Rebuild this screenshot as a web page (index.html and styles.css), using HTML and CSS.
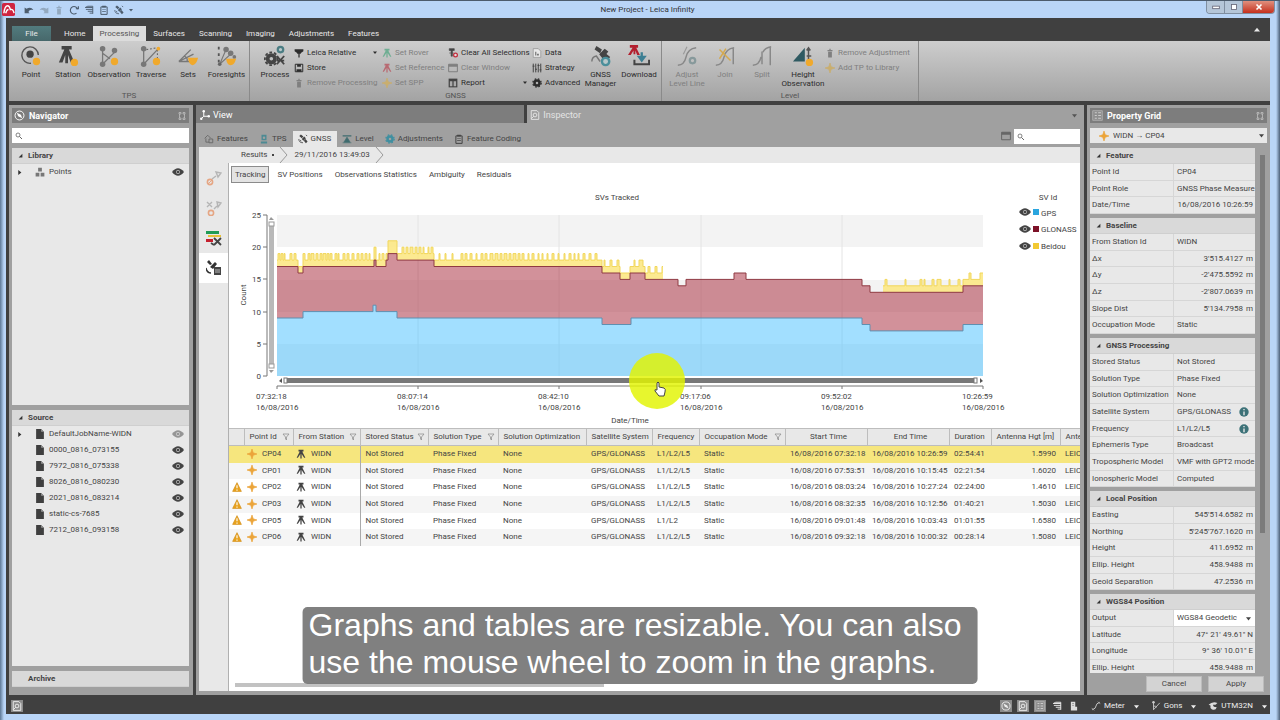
FILE: index.html
```html
<!DOCTYPE html>
<html lang="en">
<head>
  <meta charset="UTF-8">
  <meta name="viewport" content="width=device-width, initial-scale=1.0">
  <title>New Project - Leica Infinity</title>
  <link rel="stylesheet" href="styles.css">
</head>
<body>

  <!-- icon sprite -->
  <svg class="sprite" aria-hidden="true">
    <symbol id="i-point" viewBox="0 0 24 24"><path d="M12 20A9 9 0 1 1 20 11" fill="none" stroke="#555" stroke-width="1.6"/><circle cx="11" cy="10" r="4" fill="#444"/><circle cx="18" cy="18" r="4" fill="#f0a92c"/></symbol>
    <symbol id="i-station" viewBox="0 0 24 24"><path d="M5 1h11v4H5zM8 5h5l6 14h-4l-3-8v9H9v-9l-3 8H2z" fill="#444"/><circle cx="19" cy="19" r="4" fill="#f0a92c"/></symbol>
    <symbol id="i-observation" viewBox="0 0 24 24"><path d="M5 4v17M5 21L19 7M5 9l8 6" fill="none" stroke="#777" stroke-width="1.4"/><circle cx="5" cy="4" r="3" fill="#777"/><circle cx="5" cy="21" r="3" fill="#777"/><circle cx="18" cy="6" r="3" fill="#777"/><circle cx="18" cy="18" r="4" fill="#f0a92c"/></symbol>
    <symbol id="i-traverse" viewBox="0 0 24 24"><path d="M4 4v17M4 21L20 4" fill="none" stroke="#777" stroke-width="1.4"/><path d="M7 5l12-2M19 5v12" fill="none" stroke="#666" stroke-width="1.2" stroke-dasharray="2 2"/><circle cx="4" cy="4" r="3" fill="#777"/><circle cx="4" cy="21" r="3" fill="#777"/><circle cx="20" cy="4" r="2" fill="#f0a92c"/><circle cx="18" cy="18" r="4" fill="#f0a92c"/></symbol>
    <symbol id="i-sets" viewBox="0 0 24 24"><path d="M2 18h18M2 18L15 5M2 18l16-8M8 12q4 2 3 6" fill="none" stroke="#777" stroke-width="1.4"/><path d="M12 14h11q-2 8-6 8t-5-8z" fill="#f0a92c"/></symbol>
    <symbol id="i-foresights" viewBox="0 0 24 24"><path d="M3 2v18" stroke="#555" stroke-width="2" stroke-dasharray="3 4"/><path d="M4 21L18 8M4 21L11 5" fill="none" stroke="#777" stroke-width="1.2"/><circle cx="4" cy="21" r="2" fill="#666"/><circle cx="11" cy="5" r="3" fill="#777"/><circle cx="16" cy="9" r="3" fill="#777"/><circle cx="20" cy="13" r="2" fill="#777"/><path d="M11 15h11q-2 7-6 7t-5-7z" fill="#f0a92c"/></symbol>
    <symbol id="i-gear" viewBox="0 0 24 24"><circle cx="12" cy="12" r="6" fill="none" stroke="currentColor" stroke-width="6"/><circle cx="12" cy="12" r="10" fill="none" stroke="currentColor" stroke-width="3" stroke-dasharray="4 4"/></symbol>
    <symbol id="i-process" viewBox="0 0 24 24"><circle cx="8" cy="15" r="4" fill="none" stroke="#444" stroke-width="4"/><circle cx="8" cy="15" r="7" fill="none" stroke="#444" stroke-width="2" stroke-dasharray="3 2"/><circle cx="18" cy="5" r="3" fill="#b9c8ca" stroke="#4b7d83" stroke-width="2.4"/><path d="M14 12l8 9M22 12l-8 9M15 17h7" stroke="#444" stroke-width="2"/></symbol>
    <symbol id="i-sat" viewBox="0 0 24 24"><path d="M7 1l6 5-4 4-6-5zM18 12l5 6-4 4-5-6zM9 12l6-6 4 4-6 6z" fill="currentColor"/><path d="M19 2l3 3M2 12q0 9 10 9M5 15l3 2" fill="none" stroke="currentColor" stroke-width="2"/></symbol>
    <symbol id="i-manager" viewBox="0 0 24 24"><path d="M7 1l6 4-2 4-6-4zM17 9l5 4-3 4-5-4zM10 10l6-6 4 3-6 8z" fill="#444"/><path d="M2 18q0-5 5-6l4 6" fill="none" stroke="#777" stroke-width="1.6"/><circle cx="17" cy="18" r="4" fill="#b9c8ca" stroke="#4b8f9b" stroke-width="2.6"/></symbol>
    <symbol id="i-download" viewBox="0 0 24 24"><path d="M2 0h9v3H2zM5 3h4l4 8h-3L8 6v4H6V6l-3 5H0z" fill="#b3202f"/><path d="M15 8v7M12 13l3 4 3-4z" stroke="#3d7f93" stroke-width="2.5" fill="#3d7f93"/><path d="M7 16v5h16v-5" fill="none" stroke="#444" stroke-width="2.2"/></symbol>
    <symbol id="i-levelline" viewBox="0 0 24 24"><path d="M2 22q7 0 9-9t11-10" fill="none" stroke="#888" stroke-width="1.6"/><path d="M8 10l4-8" stroke="#999" stroke-width="1.2"/><circle cx="18" cy="17" r="3" fill="none" stroke="#87999b" stroke-width="2.4"/></symbol>
    <symbol id="i-join" viewBox="0 0 24 24"><path d="M2 22q7 0 9-9t11-10M21 4v17" fill="none" stroke="#888" stroke-width="1.6"/><path d="M6 5l12 12M13 4L6 15" stroke="#d4a94e" stroke-width="1.6"/></symbol>
    <symbol id="i-split" viewBox="0 0 24 24"><path d="M2 22q7 0 9-9M13 8q2-5 9-6M21 3v19M12 7v14" fill="none" stroke="#888" stroke-width="1.6"/></symbol>
    <symbol id="i-height" viewBox="0 0 24 24"><path d="M1 18L14 3v15z" fill="#2f5a62"/><path d="M18 3v16M16 6l2-3 2 3M16 12h5" fill="none" stroke="#555" stroke-width="1.6"/><circle cx="19" cy="19" r="4" fill="#f0a92c"/></symbol>
    <symbol id="i-tripod" viewBox="0 0 16 16"><path d="M4 1h8v3H4zM6 4h4l5 10h-2L9 8v7H7V8l-4 6H1z" fill="currentColor"/></symbol>
    <symbol id="i-receiver" viewBox="0 0 16 16"><path d="M1 2h14v3l-4 3v1H9v6H7V9H5V8L1 5z" fill="currentColor"/></symbol>
    <symbol id="i-disk" viewBox="0 0 16 16"><path d="M2 2h12v12H2z" fill="none" stroke="currentColor" stroke-width="1.6"/><path d="M5 2h6v4H5zM4 10h8v4H4z" fill="currentColor"/></symbol>
    <symbol id="i-bin" viewBox="0 0 16 16"><path d="M4 3h8v2H4zM5 6h6v9H5zM7 1h2v2H7z" fill="currentColor"/></symbol>
    <symbol id="i-cross" viewBox="0 0 16 16"><path d="M8 0l2 6 6 2-6 2-2 6-2-6-6-2 6-2z" fill="currentColor" stroke="currentColor"/></symbol>
    <symbol id="i-clearsel" viewBox="0 0 16 16"><path d="M2 1h8v3H2zM5 4h2v9H5zM2 8h7" fill="#444" stroke="#444"/><circle cx="12" cy="11" r="3" fill="#ddd" stroke="#c22b3b" stroke-width="2"/></symbol>
    <symbol id="i-window" viewBox="0 0 16 16"><path d="M1 2h14v12H1z" fill="none" stroke="currentColor" stroke-width="1.6"/><path d="M1 2h14v4H1z" fill="currentColor"/></symbol>
    <symbol id="i-report" viewBox="0 0 16 16"><path d="M1 1h14v14H1z" fill="#444"/><path d="M3 5h4v8H3zM9 5h4v8H9z" fill="#aaa"/></symbol>
    <symbol id="i-page" viewBox="0 0 16 16"><path d="M2 1h8l4 4v10H2z" fill="#e8e8e8" stroke="#888"/><path d="M5 6h2v6H5zM8 9h3v3H8z" fill="#777"/></symbol>
    <symbol id="i-strategy" viewBox="0 0 16 16"><path d="M2 1v14M6 1v14M10 1v14M14 1v14M1 5h3M5 10h3M9 4h3M12 11h3" stroke="#444" stroke-width="1.6"/></symbol>
    <symbol id="i-undo" viewBox="0 0 16 16"><path d="M1 13V4l3 2q7-4 11 2-6-2-8 3l2 2z" fill="currentColor"/></symbol>
    <symbol id="i-redo" viewBox="0 0 16 16"><path d="M15 13V4l-3 2Q5 2 1 8q6-2 8 3l-2 2z" fill="currentColor"/></symbol>
    <symbol id="i-refresh" viewBox="0 0 16 16"><path d="M12 13A6 6 0 1 1 14 7M11 6h4V2" fill="none" stroke="currentColor" stroke-width="1.8"/></symbol>
    <symbol id="i-layers" viewBox="0 0 16 16"><path d="M2 4h12M3 7h11M6 10h8M9 13h5M2 4l4-2h8v12" fill="none" stroke="currentColor" stroke-width="1.5"/></symbol>
    <symbol id="i-clip" viewBox="0 0 16 16"><path d="M3 3h10v12H3z" fill="none" stroke="currentColor" stroke-width="1.6"/><path d="M5 1h6v3H5zM5 7h6v1H5zM5 10h6v1H5z" fill="currentColor"/></symbol>
    <symbol id="i-compass" viewBox="0 0 16 16"><circle cx="8" cy="8" r="6.5" fill="none" stroke="currentColor" stroke-width="1.4"/><path d="M4 4l6 3 2 5-6-3z" fill="currentColor"/></symbol>
    <symbol id="i-pin" viewBox="0 0 16 16"><path d="M2 1h4v3H2zM10 1h4v3h-4zM2 12h4v3H2zM10 12h4v3h-4zM3 4v8M13 4v8" fill="none" stroke="currentColor" stroke-width="1.4"/></symbol>
    <symbol id="i-search" viewBox="0 0 16 16"><circle cx="6" cy="6" r="4" fill="none" stroke="#666" stroke-width="1.6"/><path d="M9 9l5 5" stroke="#666" stroke-width="2"/></symbol>
    <symbol id="i-open" viewBox="0 0 8 8"><path d="M7 1v6H1z" fill="#333"/></symbol>
    <symbol id="i-closed" viewBox="0 0 8 8"><path d="M2 0l5 4-5 4z" fill="#333"/></symbol>
    <symbol id="i-down" viewBox="0 0 8 8"><path d="M0 2h8L4 7z" fill="currentColor"/></symbol>
    <symbol id="i-up" viewBox="0 0 8 8"><path d="M0 6h8L4 1z" fill="currentColor"/></symbol>
    <symbol id="i-points" viewBox="0 0 16 16"><path d="M5 1h6v6H5zM1 9h6v6H1zM9 9h6v6H9z" fill="#777"/></symbol>
    <symbol id="i-eye" viewBox="0 0 16 10"><path d="M0 5q8-10 16 0-8 10-16 0z" fill="currentColor"/><circle cx="8" cy="5" r="2.6" fill="#ccc"/><circle cx="8" cy="5" r="1.8" fill="currentColor"/></symbol>
    <symbol id="i-file" viewBox="0 0 16 18"><path d="M1 0h9l5 5v13H1z" fill="#3f3f3f"/><path d="M10 0v5h5z" fill="#999"/></symbol>
    <symbol id="i-axes" viewBox="0 0 16 16"><path d="M6 3v7h7M6 10l-4 4" fill="none" stroke="#fff" stroke-width="1.6"/><circle cx="6" cy="2" r="2" fill="#fff"/><circle cx="14" cy="10" r="2" fill="#fff"/><circle cx="2" cy="14" r="2" fill="#fff"/></symbol>
    <symbol id="i-inspect" viewBox="0 0 16 16"><path d="M2 1h9l3 3v11H2z" fill="none" stroke="currentColor" stroke-width="1.5"/><circle cx="8" cy="8" r="3" fill="none" stroke="currentColor" stroke-width="1.5"/><path d="M6 10l-4 4" stroke="currentColor" stroke-width="1.5"/></symbol>
    <symbol id="i-feature" viewBox="0 0 16 16"><path d="M1 7l5-5 5 5M3 7v6h5M8 8h6v6H8z" fill="none" stroke="#666" stroke-width="1.4"/></symbol>
    <symbol id="i-total" viewBox="0 0 16 16"><path d="M4 1h8v9H4zM3 12h10v3H3z" fill="#4d8a93"/><circle cx="8" cy="6" r="2" fill="#a0a0a0"/></symbol>
    <symbol id="i-device" viewBox="0 0 16 16"><path d="M3 1h7v14H3zM10 9h3v6h-3z" fill="#ddd"/><path d="M5 4h3M5 7h3" stroke="#777"/></symbol>
    <symbol id="i-level" viewBox="0 0 16 16"><path d="M1 3h14" stroke="#3f6b6f" stroke-width="2"/><path d="M8 5l5 8H3zM1 14h14" fill="#3f6b6f" stroke="#3f6b6f"/></symbol>
    <symbol id="i-baseline" viewBox="0 0 16 16"><circle cx="4" cy="12" r="2.6" fill="none" stroke="#e5a684" stroke-width="1.6"/><path d="M2 14l4-4" stroke="#e5a684"/><path d="M6 9l4-3M10 2l5 1-3 4z" fill="none" stroke="#b5b5b5" stroke-width="1.4"/></symbol>
    <symbol id="i-baselines" viewBox="0 0 16 16"><circle cx="5" cy="13" r="2.6" fill="none" stroke="#e5a684" stroke-width="1.6"/><path d="M1 2l5 5M6 2L1 7M8 9l3-3M11 2l4 1-3 4z" fill="none" stroke="#b5b5b5" stroke-width="1.4"/></symbol>
    <symbol id="i-bars" viewBox="0 0 16 16"><path d="M0 1h13v3H0z" fill="#1f9b55"/><path d="M2 5h13v2H2z" fill="#e6c23a"/><path d="M0 9h7v3H0z" fill="#c5202e"/><path d="M8 8l7 7M15 8l-7 7M5 13l3 2" stroke="#444" stroke-width="1.8"/></symbol>
    <symbol id="i-satlist" viewBox="0 0 16 16"><path d="M3 0l3 4-2 1-3-3zM4 7l5-5 2 2-4 5z" fill="#333"/><path d="M0 8q1 5 5 5" fill="none" stroke="#333" stroke-width="1.4"/><path d="M8 7h7v8H8z" fill="#444"/><path d="M9 10h5M9 12h5" stroke="#bbb"/></symbol>
    <symbol id="i-filter" viewBox="0 0 16 16"><path d="M2 2h12L9 8v6L7 12V8z" fill="none" stroke="#888" stroke-width="1.4"/></symbol>
    <symbol id="i-warn" viewBox="0 0 16 16"><path d="M8 1l7 14H1z" fill="#e8a21c" stroke="#d08a10"/><path d="M8 5v5M8 12v2" stroke="#fff" stroke-width="1.8"/></symbol>
    <symbol id="i-info" viewBox="0 0 16 16"><circle cx="8" cy="8" r="7.5" fill="#3d7278"/><path d="M8 7v6M8 3v2" stroke="#e8e8e8" stroke-width="2.2"/></symbol>
    <symbol id="i-grid" viewBox="0 0 16 16"><path d="M1 1h14v14H1z" fill="#8e8e8e" stroke="#bbb"/><path d="M4 4h3M4 8h3M4 12h3M9 4h4M9 8h4M9 12h4" stroke="#ccc" stroke-width="1.6"/></symbol>
    <symbol id="i-length" viewBox="0 0 16 16"><path d="M2 14q6-2 6-6t6-6" fill="none" stroke="#ccc" stroke-width="1.5"/><path d="M1 11l4 4M11 1l4 4" stroke="#ccc"/></symbol>
    <symbol id="i-angle" viewBox="0 0 16 16"><path d="M4 2v12L14 3M4 8q4 0 5 2" fill="none" stroke="#ccc" stroke-width="1.4"/><circle cx="4" cy="2" r="2" fill="#ccc"/></symbol>
    <symbol id="i-globe" viewBox="0 0 16 16"><path d="M1 6q6-6 14-3l-3 3H8q0 4 6 4-2 6-8 3-3-2-2-6z" fill="#ddd"/></symbol>
  </svg>

  <div class="window">
    <header class="titlebar">
      <svg class="logo" viewBox="0 0 14 14"><rect width="14" height="14" rx="2" fill="#cf2440"/><path d="M2 11q1-8 4-8 2 0 3 4 3-1 4 4M4 11q1-4 3-4" fill="none" stroke="#fff" stroke-width="1.5"/></svg>
      <div class="quick">
        <button aria-label="Undo"><svg><use href="#i-undo"/></svg></button>
        <button class="dim" aria-label="Redo"><svg><use href="#i-redo"/></svg></button>
        <button class="dim" aria-label="Delete"><svg><use href="#i-bin"/></svg></button>
        <button aria-label="Refresh"><svg><use href="#i-refresh"/></svg></button>
        <button aria-label="Layers"><svg><use href="#i-layers"/></svg></button>
        <button aria-label="Report"><svg><use href="#i-clip"/></svg></button>
        <button aria-label="GNSS"><svg><use href="#i-sat"/></svg></button>
        <button class="caret" aria-label="More"><svg><use href="#i-down"/></svg></button>
      </div>
      <h1>New Project - Leica Infinity</h1>
      <div class="winbtns">
        <button aria-label="Minimize"><svg viewBox="0 0 12 8"><rect x="2" y="3" width="8" height="3" fill="#fff" stroke="#667"/></svg></button>
        <button aria-label="Maximize"><svg viewBox="0 0 12 8"><rect x="3" y="1" width="6" height="6" fill="#fff" stroke="#667"/></svg></button>
        <button class="close" aria-label="Close"><svg viewBox="0 0 12 8"><path d="M3 1l6 6M9 1L3 7" stroke="#fff" stroke-width="2"/></svg></button>
      </div>
    </header>

    <div class="app">
      <nav class="menu">
        <a class="file" href="#">File</a>
        <a href="#">Home</a>
        <a class="active" href="#">Processing</a>
        <a href="#">Surfaces</a>
        <a href="#">Scanning</a>
        <a href="#">Imaging</a>
        <a href="#">Adjustments</a>
        <a href="#">Features</a>
        <button class="collapse" aria-label="Collapse ribbon"><svg><use href="#i-up"/></svg></button>
      </nav>

      <div class="ribbon">
        <section class="group tps">
          <div class="tools">
            <button class="big"><svg><use href="#i-point"/></svg>Point</button>
            <button class="big"><svg><use href="#i-station"/></svg>Station</button>
            <button class="big"><svg><use href="#i-observation"/></svg>Observation</button>
            <button class="big"><svg><use href="#i-traverse"/></svg>Traverse</button>
            <button class="big"><svg><use href="#i-sets"/></svg>Sets</button>
            <button class="big"><svg><use href="#i-foresights"/></svg>Foresights</button>
          </div>
          <h2>TPS</h2>
        </section>
        <section class="group gnss">
          <div class="tools">
            <button class="big"><svg><use href="#i-process"/></svg>Process</button>
            <div class="stack">
              <button><svg><use href="#i-receiver"/></svg>Leica Relative<svg class="drop"><use href="#i-down"/></svg></button>
              <button><svg><use href="#i-disk"/></svg>Store</button>
              <button disabled><svg><use href="#i-bin"/></svg>Remove Processing</button>
            </div>
            <div class="stack">
              <button disabled><svg class="green"><use href="#i-tripod"/></svg>Set Rover</button>
              <button disabled><svg class="red"><use href="#i-tripod"/></svg>Set Reference</button>
              <button disabled><svg class="gold"><use href="#i-cross"/></svg>Set SPP</button>
            </div>
            <div class="stack">
              <button><svg><use href="#i-clearsel"/></svg>Clear All Selections</button>
              <button disabled><svg><use href="#i-window"/></svg>Clear Window</button>
              <button><svg><use href="#i-report"/></svg>Report<svg class="drop"><use href="#i-down"/></svg></button>
            </div>
            <div class="stack">
              <button><svg><use href="#i-page"/></svg>Data</button>
              <button><svg><use href="#i-strategy"/></svg>Strategy</button>
              <button><svg><use href="#i-gear"/></svg>Advanced</button>
            </div>
            <button class="big"><svg><use href="#i-manager"/></svg>GNSS<br>Manager</button>
            <button class="big"><svg><use href="#i-download"/></svg>Download</button>
          </div>
          <h2>GNSS</h2>
        </section>
        <section class="group level">
          <div class="tools">
            <button class="big" disabled><svg><use href="#i-levelline"/></svg>Adjust<br>Level Line</button>
            <button class="big" disabled><svg><use href="#i-join"/></svg>Join</button>
            <button class="big" disabled><svg><use href="#i-split"/></svg>Split</button>
            <button class="big"><svg><use href="#i-height"/></svg>Height<br>Observation</button>
            <div class="stack">
              <button disabled><svg><use href="#i-bin"/></svg>Remove Adjustment</button>
              <button disabled><svg class="gold"><use href="#i-cross"/></svg>Add TP to Library</button>
            </div>
          </div>
          <h2>Level</h2>
        </section>
      </div>

      <main class="workspace">
        <aside class="panel navigator">
          <h2 class="panel-title"><svg><use href="#i-compass"/></svg>Navigator<svg class="pin"><use href="#i-pin"/></svg></h2>
          <label class="search"><svg><use href="#i-search"/></svg><input type="text" aria-label="Search navigator"></label>
          <section class="tree">
            <h3><svg><use href="#i-open"/></svg>Library</h3>
            <ul>
              <li><svg class="tw"><use href="#i-closed"/></svg><svg class="ic"><use href="#i-points"/></svg>Points<svg class="eye"><use href="#i-eye"/></svg></li>
            </ul>
          </section>
          <section class="tree">
            <h3><svg><use href="#i-open"/></svg>Source</h3>
            <ul>
              <li><svg class="tw"><use href="#i-closed"/></svg><svg class="ic"><use href="#i-file"/></svg>DefaultJobName-WIDN<svg class="eye off"><use href="#i-eye"/></svg></li>
              <li><svg class="tw"></svg><svg class="ic"><use href="#i-file"/></svg>0000_0816_073155<svg class="eye"><use href="#i-eye"/></svg></li>
              <li><svg class="tw"></svg><svg class="ic"><use href="#i-file"/></svg>7972_0816_075338<svg class="eye"><use href="#i-eye"/></svg></li>
              <li><svg class="tw"></svg><svg class="ic"><use href="#i-file"/></svg>8026_0816_080230<svg class="eye"><use href="#i-eye"/></svg></li>
              <li><svg class="tw"></svg><svg class="ic"><use href="#i-file"/></svg>2021_0816_083214<svg class="eye"><use href="#i-eye"/></svg></li>
              <li><svg class="tw"></svg><svg class="ic"><use href="#i-file"/></svg>static-cs-7685<svg class="eye"><use href="#i-eye"/></svg></li>
              <li><svg class="tw"></svg><svg class="ic"><use href="#i-file"/></svg>7212_0816_093158<svg class="eye"><use href="#i-eye"/></svg></li>
            </ul>
          </section>
          <section class="tree closed">
            <h3><svg></svg>Archive</h3>
          </section>
        </aside>

        <section class="inspector">
          <div class="doc-tabs">
            <button><svg><use href="#i-axes"/></svg>View</button>
            <button class="active"><svg><use href="#i-inspect"/></svg>Inspector<svg class="more"><use href="#i-down"/></svg></button>
          </div>
          <div class="sub-tabs">
            <button><svg><use href="#i-feature"/></svg>Features</button>
            <button><svg><use href="#i-total"/></svg>TPS</button>
            <button class="active"><svg><use href="#i-sat"/></svg>GNSS</button>
            <button><svg><use href="#i-level"/></svg>Level</button>
            <button><svg class="teal"><use href="#i-gear"/></svg>Adjustments</button>
            <button><svg><use href="#i-clip"/></svg>Feature Coding</button>
            <svg class="layout"><use href="#i-window"/></svg>
            <label class="search"><svg><use href="#i-search"/></svg><input type="text" aria-label="Search inspector"></label>
          </div>
          <div class="content">
            <div class="crumbs">
              <a href="#">Results</a><span class="dot"></span><svg viewBox="0 0 10 16"><path d="M1 0l7 8-7 8" fill="none" stroke="#999"/></svg>
              <a href="#">29/11/2016 13:49:03</a><svg viewBox="0 0 10 16"><path d="M1 0l7 8-7 8" fill="none" stroke="#999"/></svg>
            </div>
            <div class="split">
              <div class="rail">
                <button aria-label="Baselines"><svg><use href="#i-baseline"/></svg></button>
                <button aria-label="Stations"><svg><use href="#i-baselines"/></svg></button>
                <button aria-label="Satellites"><svg><use href="#i-bars"/></svg></button>
                <button class="active" aria-label="Results report"><svg><use href="#i-satlist"/></svg></button>
              </div>
              <div class="results">
                <div class="views">
                  <button class="active">Tracking</button>
                  <button>SV Positions</button>
                  <button>Observations Statistics</button>
                  <button>Ambiguity</button>
                  <button>Residuals</button>
                </div>

                <svg class="chart" viewBox="0 0 851 245" role="img" aria-label="SVs Tracked">
                  <text x="388" y="17" text-anchor="middle">SVs Tracked</text>
                  <g class="bands">
                    <rect x="48" y="32" width="706" height="32"/>
                    <rect x="48" y="97" width="706" height="32"/>
                    <rect x="48" y="161" width="706" height="32"/>
                    <path d="M189 32v161M330 32v161M472 32v161M613 32v161"/>
                  </g>
                  <g id="series"></g>
                  <g class="axis">
                    <path d="M34 32h4v161h-4M34 64h4M34 96h4M34 129h4M34 161h4"/>
                    <path d="M48 206v-3h706v3M189 203v3M330 203v3M472 203v3M613 203v3"/>
                  </g>
                  <g class="sliders">
                    <rect x="40" y="39" width="5" height="145" fill="#b9b9b9"/>
                    <rect x="40" y="39" width="5" height="4" fill="#fff" stroke="#999"/>
                    <rect x="40" y="181" width="5" height="4" fill="#fff" stroke="#999"/>
                    <path d="M40 37l2-3 3 3zM40 187l2 3 3-3z" fill="#999"/>
                    <rect x="56" y="195" width="691" height="5" fill="#787878"/>
                    <rect x="55" y="195" width="3" height="5" fill="#fff" stroke="#777"/>
                    <rect x="745" y="195" width="3" height="5" fill="#fff" stroke="#777"/>
                    <path d="M53 195v5l-3-2zM751 195v5l3-2z" fill="#555"/>
                  </g>
                  <g text-anchor="end">
                    <text x="32" y="35">25</text>
                    <text x="32" y="67">20</text>
                    <text x="32" y="99">15</text>
                    <text x="32" y="132">10</text>
                    <text x="32" y="164">5</text>
                    <text x="32" y="196">0</text>
                  </g>
                  <text transform="translate(17 112) rotate(-90)" text-anchor="middle">Count</text>
                  <g>
                    <text x="27" y="216">07:32:18</text><text x="27" y="227">16/08/2016</text>
                    <text x="168" y="216">08:07:14</text><text x="168" y="227">16/08/2016</text>
                    <text x="309" y="216">08:42:10</text><text x="309" y="227">16/08/2016</text>
                    <text x="451" y="216">09:17:06</text><text x="451" y="227">16/08/2016</text>
                    <text x="592" y="216">09:52:02</text><text x="592" y="227">16/08/2016</text>
                    <text x="733" y="216">10:26:59</text><text x="733" y="227">16/08/2016</text>
                  </g>
                  <text x="401" y="240" text-anchor="middle">Date/Time</text>
                  <g class="legend">
                    <text x="819" y="17" text-anchor="middle">SV Id</text>
                    <use href="#i-eye" x="790" y="25" width="12" height="8"/><rect x="804" y="26" width="6" height="6" fill="#2aa5df"/><text x="812" y="33">GPS</text>
                    <use href="#i-eye" x="790" y="42" width="12" height="8"/><rect x="804" y="43" width="6" height="6" fill="#7d1128"/><text x="812" y="49">GLONASS</text>
                    <use href="#i-eye" x="790" y="59" width="12" height="8"/><rect x="804" y="60" width="6" height="6" fill="#f2c933"/><text x="812" y="66">Beidou</text>
                  </g>
                  <circle class="spot" cx="428" cy="198" r="28"/>
                  <path d="M428 200q1-2 2 0v4l5 1q2 1 1 4l-1 4h-5l-4-5q-1-2 2-1z" fill="#fff" stroke="#444"/>
                </svg>

                <div class="table-wrap">
                  <table>
                    <colgroup>
                      <col class="w15"><col class="w49"><col class="w67"><col class="w68"><col class="w70"><col class="w88"><col class="w66"><col class="w47"><col class="w86"><col class="w82"><col class="w82"><col class="w42"><col class="w69"><col class="w82">
                    </colgroup>
                    <thead>
                      <tr><th></th><th>Point Id<svg><use href="#i-filter"/></svg></th><th>From Station<svg><use href="#i-filter"/></svg></th><th>Stored Status<svg><use href="#i-filter"/></svg></th><th>Solution Type<svg><use href="#i-filter"/></svg></th><th>Solution Optimization</th><th>Satellite System</th><th>Frequency</th><th>Occupation Mode<svg><use href="#i-filter"/></svg></th><th class="mid">Start Time</th><th class="mid">End Time</th><th>Duration</th><th>Antenna Hgt [m]</th><th>Antenna</th></tr>
                    </thead>
                    <tbody>
                      <tr class="selected"><td></td><td><svg class="plus"><use href="#i-cross"/></svg>CP04</td><td><svg class="tri"><use href="#i-tripod"/></svg>WIDN</td><td>Not Stored</td><td>Phase Fixed</td><td>None</td><td>GPS/GLONASS</td><td>L1/L2/L5</td><td>Static</td><td>16/08/2016 07:32:18</td><td>16/08/2016 10:26:59</td><td>02:54:41</td><td class="num">1.5990</td><td>LEICA</td></tr>
                      <tr><td></td><td><svg class="plus"><use href="#i-cross"/></svg>CP01</td><td><svg class="tri"><use href="#i-tripod"/></svg>WIDN</td><td>Not Stored</td><td>Phase Fixed</td><td>None</td><td>GPS/GLONASS</td><td>L1/L2/L5</td><td>Static</td><td>16/08/2016 07:53:51</td><td>16/08/2016 10:15:45</td><td>02:21:54</td><td class="num">1.6020</td><td>LEICA</td></tr>
                      <tr><td><svg><use href="#i-warn"/></svg></td><td><svg class="plus"><use href="#i-cross"/></svg>CP02</td><td><svg class="tri"><use href="#i-tripod"/></svg>WIDN</td><td>Not Stored</td><td>Phase Fixed</td><td>None</td><td>GPS/GLONASS</td><td>L1/L2/L5</td><td>Static</td><td>16/08/2016 08:03:24</td><td>16/08/2016 10:27:24</td><td>02:24:00</td><td class="num">1.4610</td><td>LEICA</td></tr>
                      <tr><td><svg><use href="#i-warn"/></svg></td><td><svg class="plus"><use href="#i-cross"/></svg>CP03</td><td><svg class="tri"><use href="#i-tripod"/></svg>WIDN</td><td>Not Stored</td><td>Phase Fixed</td><td>None</td><td>GPS/GLONASS</td><td>L1/L2/L5</td><td>Static</td><td>16/08/2016 08:32:35</td><td>16/08/2016 10:12:56</td><td>01:40:21</td><td class="num">1.5030</td><td>LEICA</td></tr>
                      <tr><td><svg><use href="#i-warn"/></svg></td><td><svg class="plus"><use href="#i-cross"/></svg>CP05</td><td><svg class="tri"><use href="#i-tripod"/></svg>WIDN</td><td>Not Stored</td><td>Phase Fixed</td><td>None</td><td>GPS/GLONASS</td><td>L1/L2</td><td>Static</td><td>16/08/2016 09:01:48</td><td>16/08/2016 10:03:43</td><td>01:01:55</td><td class="num">1.6580</td><td>LEICA</td></tr>
                      <tr><td><svg><use href="#i-warn"/></svg></td><td><svg class="plus"><use href="#i-cross"/></svg>CP06</td><td><svg class="tri"><use href="#i-tripod"/></svg>WIDN</td><td>Not Stored</td><td>Phase Fixed</td><td>None</td><td>GPS/GLONASS</td><td>L1/L2/L5</td><td>Static</td><td>16/08/2016 09:32:18</td><td>16/08/2016 10:00:32</td><td>00:28:14</td><td class="num">1.5080</td><td>LEICA</td></tr>
                    </tbody>
                  </table>
                </div>
                <div class="hscroll"><span></span></div>
              </div>
            </div>
          </div>
        </section>

        <aside class="panel property">
          <h2 class="panel-title"><svg><use href="#i-grid"/></svg>Property Grid<svg class="pin"><use href="#i-pin"/></svg></h2>
          <div class="picker">
            <svg class="plus"><use href="#i-cross"/></svg>
            <select aria-label="Object"><option>WIDN → CP04</option></select>
            <svg class="drop"><use href="#i-down"/></svg>
          </div>
          <div class="props">
            <div class="groups">
              <section>
                <h3><svg><use href="#i-open"/></svg>Feature</h3>
                <dl>
                  <div><dt>Point Id</dt><dd>CP04</dd></div>
                  <div><dt>Point Role</dt><dd>GNSS Phase Measure</dd></div>
                  <div><dt>Date/Time</dt><dd class="num">16/08/2016 10:26:59</dd></div>
                </dl>
              </section>
              <section>
                <h3><svg><use href="#i-open"/></svg>Baseline</h3>
                <dl>
                  <div><dt>From Station Id</dt><dd>WIDN</dd></div>
                  <div><dt>Δx</dt><dd class="num">3'515.4127 <i>m</i></dd></div>
                  <div><dt>Δy</dt><dd class="num">-2'475.5592 <i>m</i></dd></div>
                  <div><dt>Δz</dt><dd class="num">-2'807.0639 <i>m</i></dd></div>
                  <div><dt>Slope Dist</dt><dd class="num">5'134.7958 <i>m</i></dd></div>
                  <div><dt>Occupation Mode</dt><dd>Static</dd></div>
                </dl>
              </section>
              <section>
                <h3><svg><use href="#i-open"/></svg>GNSS Processing</h3>
                <dl>
                  <div><dt>Stored Status</dt><dd>Not Stored</dd></div>
                  <div><dt>Solution Type</dt><dd>Phase Fixed</dd></div>
                  <div><dt>Solution Optimization</dt><dd>None</dd></div>
                  <div><dt>Satellite System</dt><dd>GPS/GLONASS<svg><use href="#i-info"/></svg></dd></div>
                  <div><dt>Frequency</dt><dd>L1/L2/L5<svg><use href="#i-info"/></svg></dd></div>
                  <div><dt>Ephemeris Type</dt><dd>Broadcast</dd></div>
                  <div><dt>Tropospheric Model</dt><dd>VMF with GPT2 mode</dd></div>
                  <div><dt>Ionospheric Model</dt><dd>Computed</dd></div>
                </dl>
              </section>
              <section>
                <h3><svg><use href="#i-open"/></svg>Local Position</h3>
                <dl>
                  <div><dt>Easting</dt><dd class="num">545'514.6582 <i>m</i></dd></div>
                  <div><dt>Northing</dt><dd class="num">5'245'767.1620 <i>m</i></dd></div>
                  <div><dt>Height</dt><dd class="num">411.6952 <i>m</i></dd></div>
                  <div><dt>Ellip. Height</dt><dd class="num">458.9488 <i>m</i></dd></div>
                  <div><dt>Geoid Separation</dt><dd class="num">47.2536 <i>m</i></dd></div>
                </dl>
              </section>
              <section>
                <h3><svg><use href="#i-open"/></svg>WGS84 Position</h3>
                <dl>
                  <div><dt><label for="output">Output</label></dt><dd class="edit"><select id="output"><option>WGS84 Geodetic</option></select><svg class="drop"><use href="#i-down"/></svg></dd></div>
                  <div><dt>Latitude</dt><dd class="num">47° 21' 49.61" N</dd></div>
                  <div><dt>Longitude</dt><dd class="num">9° 36' 10.01" E</dd></div>
                  <div><dt>Ellip. Height</dt><dd class="num">458.9488 <i>m</i></dd></div>
                </dl>
              </section>
            </div>
            <div class="vscroll"><span></span></div>
          </div>
          <div class="actions">
            <button>Cancel</button>
            <button>Apply</button>
          </div>
        </aside>
      </main>

      <footer class="status">
        <button class="on" aria-label="Messages"><svg><use href="#i-inspect"/></svg></button>
        <div class="toggles">
          <button class="on" aria-label="Navigator"><svg><use href="#i-compass"/></svg></button>
          <button class="on" aria-label="Inspector"><svg><use href="#i-inspect"/></svg></button>
          <button class="on" aria-label="Property grid"><svg><use href="#i-grid"/></svg></button>
          <button aria-label="Layers"><svg><use href="#i-layers"/></svg></button>
          <button aria-label="Device"><svg><use href="#i-device"/></svg></button>
        </div>
        <button class="unit"><svg><use href="#i-length"/></svg>Meter<svg class="drop"><use href="#i-down"/></svg></button>
        <button class="unit"><svg><use href="#i-angle"/></svg>Gons<svg class="drop"><use href="#i-down"/></svg></button>
        <button class="unit"><svg><use href="#i-globe"/></svg>UTM32N<svg class="drop"><use href="#i-down"/></svg></button>
      </footer>
    </div>

    <p class="caption">Graphs and tables are resizable. You can also<br>use the mouse wheel to zoom in the graphs.</p>
  </div>

  <script src="script.js"></script>
</body>
</html>
```
FILE: styles.css
```css
* {
  box-sizing: border-box;
}

body {
  margin: 0;
  font-family: Roboto, "Open Sans", sans-serif;
  font-size: 8px;
  line-height: 12px;
  color: #444;
}

h1, h2, h3, p, ul, dl, dd {
  margin: 0;
  padding: 0;
  font-size: inherit;
}

ul {
  list-style: none;
}

i {
  font-style: normal;
}

a {
  color: inherit;
  text-decoration: none;
}

button, input, select {
  font: inherit;
  color: inherit;
  border: none;
  background: none;
  padding: 0;
  margin: 0;
}

svg {
  width: 10px;
  height: 10px;
  flex: none;
  display: block;
}

.sprite {
  position: absolute;
  width: 0;
  height: 0;
}

.window {
  height: 100vh;
  min-height: 600px;
  display: flex;
  flex-direction: column;
  padding: 0 10px 6px 6px;
  border-top: 1px solid #4c5b6c;
  background: linear-gradient(90deg, #5d7896, #b9d5f7 4px, #b9d5f7 calc(100% - 4px), #4c6079);
  position: relative;
}

/* title bar */

.titlebar {
  display: grid;
  grid-template-columns: 14px 1fr auto 1fr;
  align-items: center;
  gap: 4px;
  height: 17px;
  margin: 0 -5px 0 -4px;
  color: #333;
}

.titlebar h1 {
  font-weight: 400;
}

.logo {
  width: 13px;
  height: 13px;
}

.quick {
  display: flex;
  gap: 5px;
  margin-left: 4px;
  color: #4d5d6e;
}

.quick .dim {
  color: #93a9c0;
}

.quick .caret svg {
  width: 4px;
}

.winbtns {
  justify-self: end;
  align-self: start;
  display: flex;
  border: 1px solid #7f8ea0;
  border-top: none;
  border-radius: 0 0 4px 4px;
  overflow: hidden;
}

.winbtns button {
  width: 18px;
  height: 12px;
  display: grid;
  place-items: center;
  background: #b5c6d8;
  border-right: 1px solid #7f8ea0;
}

.winbtns .close {
  width: 31px;
  background: linear-gradient(#e0907e, #c5301d);
  border: none;
}

.app {
  flex: 1;
  min-height: 0;
  display: flex;
  flex-direction: column;
  background: #404040;
  padding-left: 3px;
}

/* ribbon */

.menu {
  display: flex;
  align-items: flex-end;
  height: 23px;
  padding: 0 10px 0 3px;
  color: #e8e8e8;
}

.menu a {
  padding: 2px 7px 1px;
}

.menu a.file {
  width: 39px;
  margin-right: 6px;
  text-align: center;
  background: linear-gradient(#527b7e, #47686b);
}

.menu a.active {
  color: #555;
  background: #dcdcdc;
}

.menu .collapse {
  margin: 0 0 8px auto;
}

.menu .collapse svg {
  width: 6px;
  height: 6px;
}

.ribbon {
  display: flex;
  height: 60px;
  background: linear-gradient(#cdcdcd, #a3a3a3);
  color: #2c2c2c;
}

.group {
  display: flex;
  flex-direction: column;
  justify-content: space-between;
  border-right: 1px solid #8a8a8a;
}

.group h2 {
  font-weight: 400;
  text-align: center;
  line-height: 11px;
  color: #555;
}

.tools {
  display: grid;
  padding: 4px 2px 0 3px;
}

.tps .tools {
  grid-template-columns: 38px 36px 46px 38px 36px 41px;
}

.gnss .tools {
  padding-left: 6px;
  grid-template-columns: 38px 88px 66px 84px 48px 41px 36px;
  padding-right: 4px;
}

.level .tools {
  padding-left: 5px;
  grid-template-columns: 40px 36px 38px 44px 91px;
}

.big {
  display: flex;
  flex-direction: column;
  align-items: center;
  line-height: 9px;
  white-space: nowrap;
}

.big svg {
  width: 22px;
  height: 22px;
  margin-bottom: 3px;
}

.stack button {
  display: flex;
  align-items: center;
  gap: 3px;
  width: 100%;
  height: 15px;
  white-space: nowrap;
}

.stack .drop {
  width: 4px;
  height: 5px;
  margin: 0 5px 0 auto;
}

button:disabled {
  color: #7f7f7f;
}

.green {
  color: #6fae93;
}

.red {
  color: #b86a72;
}

.gold {
  color: #c9ae6f;
}

.teal {
  color: #3f8fa0;
}

/* workspace */

.workspace {
  flex: 1;
  min-height: 0;
  display: grid;
  grid-template-columns: 184px minmax(0, 1fr) 183px;
  gap: 3px;
  margin-top: 4px;
}

.panel {
  display: flex;
  flex-direction: column;
  gap: 5px;
  min-height: 0;
  padding: 3px 4px 8px 3px;
  background: #a0a0a0;
}

.panel-title {
  display: flex;
  align-items: center;
  gap: 4px;
  height: 15px;
  padding: 0 3px 0 2px;
  font-size: 9px;
  color: #fff;
  background: #7d7d7d;
}

.panel-title svg {
  width: 11px;
  height: 11px;
}

.panel-title .pin {
  width: 8px;
  height: 8px;
  margin-left: auto;
  color: #c5c5c5;
}

.search {
  display: flex;
  align-items: center;
  height: 15px;
  padding: 0 3px;
  background: #fff;
}

.search svg {
  width: 8px;
  height: 8px;
}

.search input {
  flex: 1;
  min-width: 0;
}

.tree {
  display: flex;
  flex-direction: column;
  flex: 243;
  background: #e8e8e8;
}

.tree + .tree {
  flex: 242;
}

.tree.closed {
  flex: none;
}

h3 {
  display: flex;
  align-items: center;
  gap: 5px;
  height: 16px;
  padding-left: 6px;
  background: #d9d9d9;
  border-bottom: 1px solid #cfcfcf;
}

h3 svg {
  width: 5px;
  height: 5px;
}

.tree li {
  display: flex;
  align-items: center;
  gap: 4px;
  height: 16px;
  padding: 0 5px 0 5px;
}

.tree .tw {
  width: 5px;
  height: 5px;
  margin-right: 9px;
}

.eye {
  width: 12px;
  height: 8px;
  margin-left: auto;
}

.eye.off {
  opacity: 0.5;
}

/* inspector */

.inspector {
  display: flex;
  flex-direction: column;
  min-height: 0;
  padding: 0 4px 4px 3px;
  background: #a0a0a0;
}

.doc-tabs {
  display: grid;
  grid-template-columns: 328fr 553fr;
  gap: 3px;
  margin: 0 -1px 0 -3px;
}

.doc-tabs button {
  display: flex;
  align-items: center;
  gap: 3px;
  height: 18px;
  padding: 2px 4px 0;
  font-size: 9px;
  color: #fff;
  background: #7d7d7d;
  border-right: 3px solid #404040;
  margin-right: -3px;
}

.doc-tabs .active {
  background: none;
  border: none;
  margin: 0;
  padding-left: 3px;
  color: #e4e4e4;
}

.doc-tabs .more {
  width: 5px;
  height: 5px;
  margin-left: auto;
  color: #555;
}

.sub-tabs {
  display: flex;
  align-items: flex-end;
  height: 24px;
}

.sub-tabs button {
  display: flex;
  align-items: center;
  gap: 3px;
  height: 16px;
  padding: 0 6px 0 5px;
}

.sub-tabs .active {
  background: #e8e8e8;
}

.sub-tabs .layout {
  margin: 0 3px 6px auto;
  color: #666;
}

.sub-tabs .search {
  width: 66px;
  margin-bottom: 3px;
}

.content {
  flex: 1;
  min-height: 0;
  display: flex;
  flex-direction: column;
  background: #e8e8e8;
}

.crumbs {
  display: flex;
  align-items: center;
  gap: 5px;
  height: 16px;
  padding-left: 42px;
}

.crumbs svg {
  height: 16px;
}

.dot {
  width: 2px;
  height: 2px;
  background: #444;
}

.split {
  flex: 1;
  min-height: 0;
  display: flex;
}

.rail {
  width: 30px;
  border-right: 1px solid #b0b0b0;
}

.rail button {
  display: grid;
  place-items: center;
  width: 100%;
  height: 30px;
}

.rail svg {
  width: 16px;
  height: 16px;
}

.rail .active {
  background: #fff;
}

.results {
  flex: 1;
  min-width: 0;
  display: flex;
  flex-direction: column;
  background: #fff;
}

.views {
  display: flex;
  gap: 4px;
  padding: 3px 2px 0;
}

.views button {
  height: 17px;
  padding: 0 3px;
  border: 1px solid transparent;
}

.views .active {
  border-color: #8b8b8b;
  background: #e3e3e3;
}

.chart {
  width: 100%;
  height: auto;
  color: #444;
}

.chart text {
  fill: #444;
}

.bands rect {
  fill: #f3f3f3;
}

.bands path {
  stroke: #e4e4e4;
}

.axis path {
  fill: none;
  stroke: #777;
}

.gps {
  fill: #46c0ff;
  fill-opacity: 0.5;
}

.glonass {
  fill: #a62336;
  fill-opacity: 0.5;
}

.beidou {
  fill: #fce67e;
  fill-opacity: 0.85;
}

.gps-line {
  fill: none;
  stroke: #5f8fb0;
}

.glonass-line {
  fill: none;
  stroke: #8f3a42;
}

.beidou-line {
  fill: none;
  stroke: #f1d75c;
}

.spot {
  fill: #e2f400;
  fill-opacity: 0.82;
}

.table-wrap {
  flex: 1;
  overflow: hidden;
}

table {
  width: 913px;
  table-layout: fixed;
  border-collapse: collapse;
  white-space: nowrap;
}

.w15 { width: 15px; }
.w42 { width: 42px; }
.w47 { width: 47px; }
.w49 { width: 49px; }
.w66 { width: 66px; }
.w67 { width: 67px; }
.w68 { width: 68px; }
.w69 { width: 69px; }
.w70 { width: 70px; }
.w82 { width: 82px; }
.w86 { width: 86px; }
.w88 { width: 88px; }

th {
  height: 17px;
  padding: 0 0 0 5px;
  font-weight: 400;
  text-align: left;
  background: #e8e8e8;
  border: solid #bdbdbd;
  border-width: 1px 1px 1px 0;
}

th.mid {
  text-align: center;
}

th svg {
  float: right;
  width: 8px;
  height: 8px;
  margin: 2px 3px 0 0;
}

td {
  height: 17px;
  padding: 0 0 0 5px;
}

tbody tr:nth-child(3n + 2) td {
  height: 16px;
}

tbody tr:nth-child(even) {
  background: #f5f5f5;
}

tbody tr.selected {
  background: #f6e67e;
}

td:first-child {
  padding-left: 3px;
}

td:nth-child(3) {
  border-right: 1px solid #aaa;
}

td:nth-child(2), td:nth-child(3) {
  padding-left: 3px;
}

td svg {
  display: inline-block;
  vertical-align: middle;
}

td .tri, td .plus {
  margin-right: 5px;
}

.plus {
  color: #eba53a;
}

.num {
  text-align: right;
}

td.num {
  padding-right: 4px;
}

.hscroll {
  height: 5px;
  margin: 0 6px 3px;
}

.hscroll span {
  display: block;
  width: 44%;
  height: 4px;
  background: #c2c2c2;
}

/* property grid */

.property {
  padding: 3px 3px 3px;
}

.picker {
  display: flex;
  align-items: center;
  gap: 4px;
  height: 15px;
  padding: 0 3px 0 9px;
  background: #e8e8e8;
}

select {
  appearance: none;
  flex: 1;
  min-width: 0;
}

.drop {
  width: 5px;
  height: 5px;
}

.props {
  flex: 1;
  min-height: 0;
  display: flex;
  gap: 5px;
}

.groups {
  flex: 1;
  min-width: 0;
  display: flex;
  flex-direction: column;
  gap: 4px;
  overflow: hidden;
}

.groups section {
  flex: none;
  background: #e8e8e8;
}

dl div {
  display: grid;
  grid-template-columns: 84px minmax(0, 1fr);
  height: 17px;
  line-height: 16px;
  white-space: nowrap;
  border-bottom: 1px solid #d6d6d6;
}

dl div:nth-child(3n + 2) {
  height: 16px;
}

dt {
  padding-left: 2px;
  border-right: 1px solid #d6d6d6;
}

dd {
  padding: 0 2px 0 3px;
  overflow: hidden;
}

dd i {
  margin-left: 1px;
}

dd svg {
  float: right;
  margin: 3px 4px 0 0;
}

dd.edit {
  display: flex;
  align-items: center;
  background: #fff;
}

dd.edit .drop {
  margin: 0 2px 0 0;
}

.vscroll {
  width: 5px;
  margin-right: 2px;
  padding-top: 7px;
}

.vscroll span {
  display: block;
  height: 73%;
  background: #7b7b7b;
}

.actions {
  display: flex;
  justify-content: flex-end;
  gap: 6px;
  padding-right: 3px;
}

.actions button {
  width: 56px;
  height: 16px;
  margin-top: -2px;
  background: #d3d3d3;
  border: 1px solid #bcbcbc;
}

/* status bar */

.status {
  display: flex;
  align-items: center;
  height: 19px;
  padding: 3px 2px 0;
  color: #eee;
}

.toggles {
  display: flex;
  gap: 5px;
  margin: 0 0 0 auto;
}

.status .on {
  color: #eee;
  background: #8c8c8c;
}

.status button {
  padding: 1px;
}

.unit {
  display: flex;
  align-items: center;
  gap: 3px;
  margin-left: 10px;
}

.unit .drop {
  margin-left: 6px;
}

/* subtitle */

.caption {
  position: absolute;
  left: 50%;
  bottom: 36px;
  transform: translateX(-50%);
  padding: 0 16px 3px 6px;
  font: 32px/37px "Liberation Sans", Arial, sans-serif;
  white-space: nowrap;
  color: #fff;
  background: rgba(120, 120, 120, 0.94);
  border-radius: 5px;
}
```
FILE: script.js
```js
const plot = { left: 48, bottom: 193, unit: 161 / 25 };
const end = 706;

// [start, satellites], each value holds until the next start
const gps = [[0, 9], [26, 10], [96, 11], [99, 10], [120, 9], [325, 8], [354, 9], [585, 8], [593, 7], [686, 8]];
const glonass = [[0, 17], [21, 16], [26, 17], [97, 18], [99, 17], [109, 18], [111, 19], [120, 18], [157, 17], [325, 16], [343, 15], [353, 16], [368, 15], [401, 14], [409, 15], [457, 16], [469, 15], [585, 14], [593, 13], [686, 14]];

// stretches with Beidou in view, and the short moments with a second satellite
const beidou = [[0, 386], [606, 706]];
const peaks = [
  [1, 3], [4, 6], [7, 8], [13, 15], [17, 19], [26, 28], [31, 33], [34, 37], [39, 41], [43, 45], [46, 49], [50, 52], [53, 55],
  [58, 60], [61, 62], [66, 68], [70, 72], [75, 77], [80, 82], [84, 86], [88, 90], [92, 93], [97, 99], [102, 103], [105, 107],
  [111, 120], [125, 127], [129, 131], [133, 136], [138, 140], [142, 144], [146, 147], [151, 152], [154, 156],
  [162, 163], [168, 169], [175, 176], [184, 186], [188, 190], [193, 195], [199, 200], [204, 206], [208, 210], [213, 216],
  [218, 221], [223, 225], [227, 230], [232, 234], [236, 239], [241, 243], [245, 247], [251, 252], [255, 257], [261, 262],
  [265, 266], [270, 271], [275, 277], [281, 282], [287, 288], [292, 294], [297, 298], [301, 302], [306, 308], [312, 314],
  [318, 320], [327, 328], [333, 335], [340, 342], [357, 358], [362, 366], [371, 373], [378, 380], [385, 386],
  [608, 610], [628, 629], [643, 645], [647, 648], [655, 657], [660, 664], [672, 673], [681, 683], [692, 694], [703, 706]
];

function valueAt(series, x) {
  let value = series[0][1];
  for (const [start, v] of series) {
    if (x >= start) value = v;
  }
  return value;
}

function points(from, to, fn) {
  const list = [];
  for (let x = from; x < to; x++) {
    const y = plot.bottom - fn(x) * plot.unit;
    list.push([plot.left + x, y], [plot.left + x + 1, y]);
  }
  return list;
}

function toPath(list) {
  return "M" + list.map(p => p[0] + " " + p[1].toFixed(1)).join("L");
}

function draw(className, d) {
  const path = document.createElementNS("http://www.w3.org/2000/svg", "path");
  path.setAttribute("class", className);
  path.setAttribute("d", d);
  document.getElementById("series").appendChild(path);
}

function area(name, from, to, low, high) {
  const top = points(from, to, high);
  const base = points(from, to, low).reverse();
  draw(name, toPath(top.concat(base)) + "Z");
  draw(name + "-line", toPath(top));
}

const gpsAt = x => valueAt(gps, x);
const glonassAt = x => valueAt(glonass, x);
const beidouAt = x => glonassAt(x) + (peaks.some(p => x >= p[0] && x < p[1]) ? 2 : 1);

beidou.forEach(span => area("beidou", span[0], span[1], glonassAt, beidouAt));
area("glonass", 0, end, gpsAt, glonassAt);
area("gps", 0, end, () => 0, gpsAt);
```
